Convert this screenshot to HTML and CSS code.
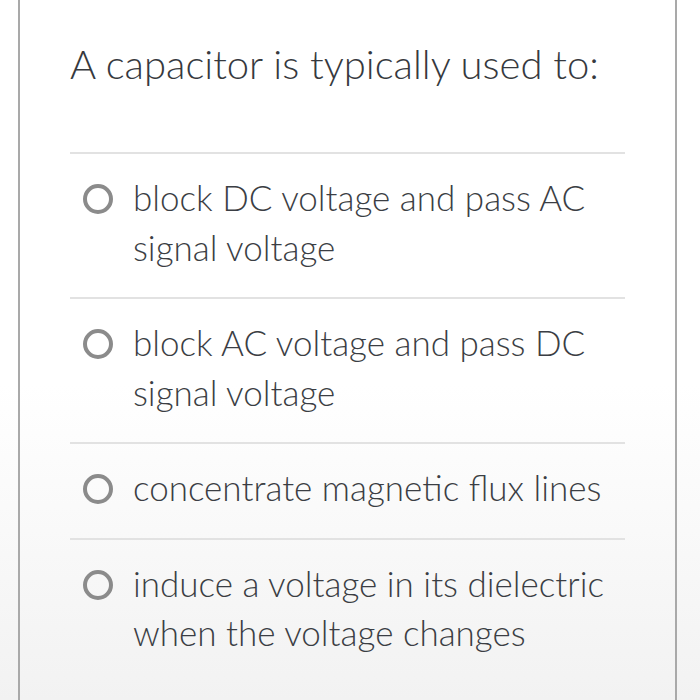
FILE: index.html
```html
<!DOCTYPE html>
<html lang="en">
<head>
<meta charset="utf-8">
<title>Question</title>
<link rel="stylesheet" href="styles.css">
</head>
<body>
<div class="card">
  <h1 class="question">A capacitor is typically used to:</h1>
  <ul class="options">
    <li class="option"><span class="radio"></span><span class="label">block DC voltage and pass AC signal voltage</span></li>
    <li class="option"><span class="radio"></span><span class="label">block AC voltage and pass DC signal voltage</span></li>
    <li class="option"><span class="radio"></span><span class="label">concentrate magnetic flux lines</span></li>
    <li class="option"><span class="radio"></span><span class="label">induce a voltage in its dielectric when the voltage changes</span></li>
  </ul>
</div>
</body>
</html>
```

FILE: styles.css
```css
html, body {
  margin: 0;
  padding: 0;
}
body {
  width: 700px;
  height: 700px;
  overflow: hidden;
  background: linear-gradient(180deg, #ffffff 0%, #ffffff 55%, #f2f2f2 100%);
  font-family: Lato, "Open Sans", sans-serif;
  color: #3b3e44;
}
.card {
  margin-left: 18px;
  width: 659px;
  height: 700px;
  border-left: 2px solid #a9a9a9;
  border-right: 2px solid #a9a9a9;
  padding: 36px 50px 0 50px;
  box-sizing: border-box;
}
.question {
  margin: 0;
  font-weight: 300;
  font-size: 40px;
  line-height: 56px;
  padding-bottom: 60px;
  color: #36393e;
}
.options {
  list-style: none;
  margin: 0;
  padding: 0;
  border-top: 2px solid #e2e2e2;
}
.option {
  display: flex;
  align-items: flex-start;
  gap: 20px;
  padding: 19px 0 25px 13px;
  border-bottom: 2px solid #e2e2e2;
  font-size: 35px;
  font-weight: 300;
  line-height: 49.5px;
}
.option:last-child {
  border-bottom: none;
}
.radio {
  flex: none;
  width: 30px;
  height: 30px;
  margin-top: 11px;
  box-sizing: border-box;
  border: 4px solid #8b8b8b;
  border-radius: 50%;
}
.label {
  flex: 1;
}
```
